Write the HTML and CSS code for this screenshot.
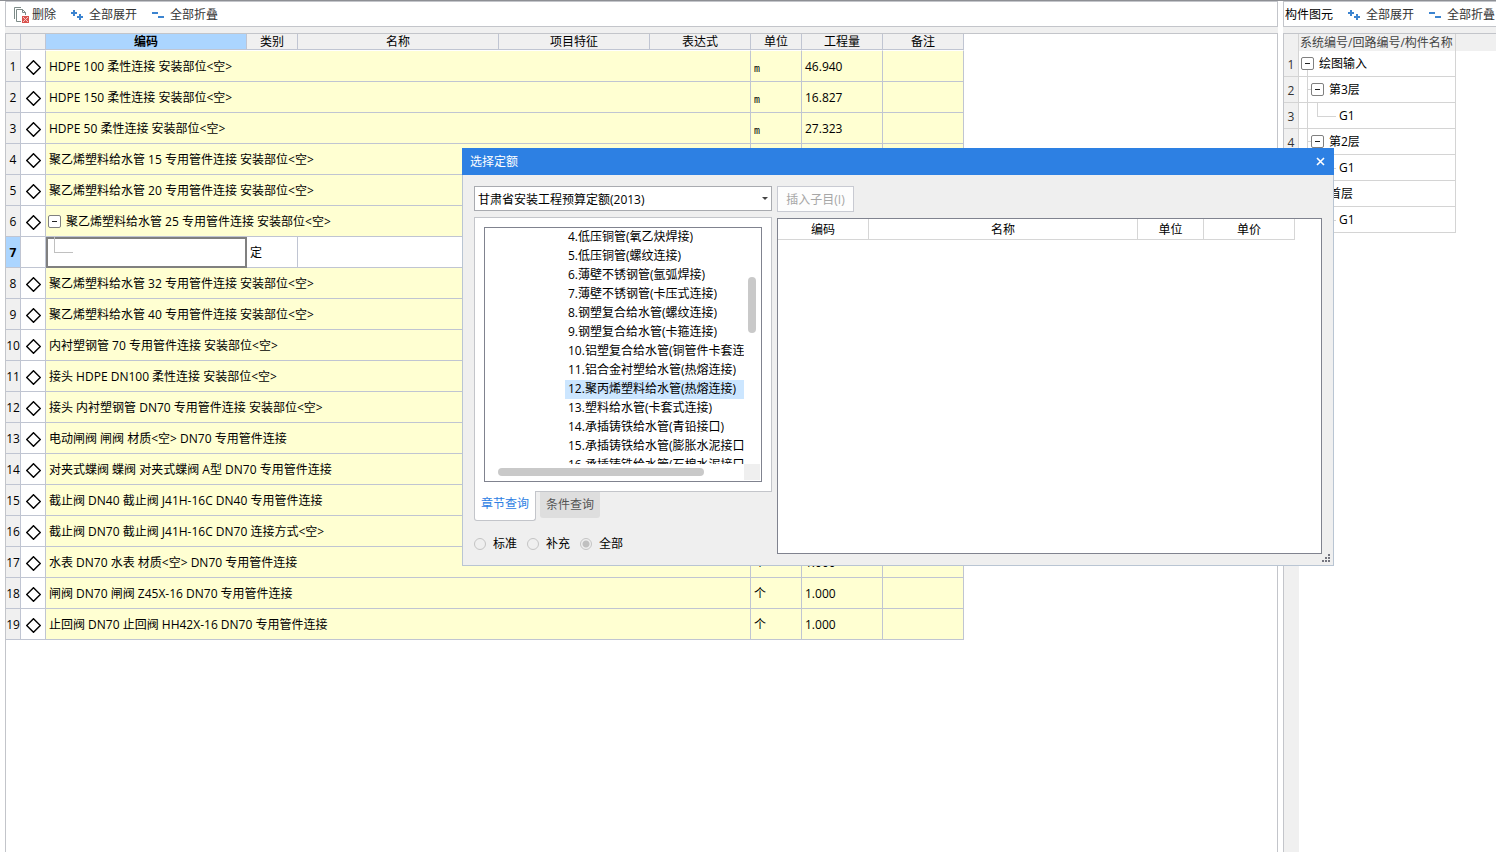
FILE: index.html
```html
<!DOCTYPE html>
<html lang="zh-CN">
<head>
<meta charset="utf-8">
<title>选择定额</title>
<link rel="stylesheet" href="styles.css">
</head>
<body>
<svg class="defs" aria-hidden="true">
  <symbol id="diamond" viewBox="0 0 15 15"><path d="M7.5 .7 14.300 7.500 7.500 14.300 .7 7.500Z" fill="#fff" stroke="#000" stroke-width="1.4"/></symbol>
  <symbol id="expand" viewBox="0 0 13 11"><path d="M0 3h6M3 0v6M6 7h6M9 4v6" fill="none" stroke="#3c84d0" stroke-width="2"/></symbol>
  <symbol id="collapse" viewBox="0 0 13 11"><path d="M0 3h6M6 7h6" fill="none" stroke="#3c84d0" stroke-width="2"/></symbol>
  <symbol id="remove" viewBox="0 0 16 16"><path d="M1.500 12V.5H8" fill="none" stroke="#7d8b88"/><path d="M8 14.500H3.500V2.500h6l3 3V8M9.500 2.500v3h3" fill="none" stroke="#7d8b88"/><path d="M9 9h7v7H9z" fill="#d9534f"/><path d="m10 10 5 5m0-5-5 5" stroke="#f6c9c6" stroke-width="1"/></symbol>
</svg>
<div class="app">
  <main class="pane pane-main">
    <div class="toolbar">
      <button class="tool" type="button"><svg class="icon-doc"><use href="#remove"/></svg>删除</button>
      <button class="tool" type="button"><svg class="icon"><use href="#expand"/></svg>全部展开</button>
      <button class="tool" type="button"><svg class="icon"><use href="#collapse"/></svg>全部折叠</button>
    </div>
    <div class="sheet">
      <table class="grid">
        <colgroup><col class="w-num"><col class="w-mark"><col class="w-code"><col class="w-kind"><col class="w-name"><col class="w-feature"><col class="w-expr"><col class="w-unit"><col class="w-qty"><col class="w-note"></colgroup>
        <thead><tr><th></th><th></th><th class="current">编码</th><th>类别</th><th>名称</th><th>项目特征</th><th>表达式</th><th>单位</th><th>工程量</th><th>备注</th></tr></thead>
        <tbody>
          <tr><th>1</th><td class="mark"><svg><use href="#diamond"/></svg></td><td colspan="5">HDPE 100 柔性连接 安装部位&lt;空&gt;</td><td class="unit">m</td><td>46.940</td><td></td></tr>
          <tr><th>2</th><td class="mark"><svg><use href="#diamond"/></svg></td><td colspan="5">HDPE 150 柔性连接 安装部位&lt;空&gt;</td><td class="unit">m</td><td>16.827</td><td></td></tr>
          <tr><th>3</th><td class="mark"><svg><use href="#diamond"/></svg></td><td colspan="5">HDPE 50 柔性连接 安装部位&lt;空&gt;</td><td class="unit">m</td><td>27.323</td><td></td></tr>
          <tr><th>4</th><td class="mark"><svg><use href="#diamond"/></svg></td><td colspan="5">聚乙烯塑料给水管 15 专用管件连接 安装部位&lt;空&gt;</td><td></td><td></td><td></td></tr>
          <tr><th>5</th><td class="mark"><svg><use href="#diamond"/></svg></td><td colspan="5">聚乙烯塑料给水管 20 专用管件连接 安装部位&lt;空&gt;</td><td></td><td></td><td></td></tr>
          <tr><th>6</th><td class="mark"><svg><use href="#diamond"/></svg></td><td colspan="5" class="parent"><button class="toggle" type="button" aria-label="折叠"></button>聚乙烯塑料给水管 25 专用管件连接 安装部位&lt;空&gt;</td><td></td><td></td><td></td></tr>
          <tr class="editing"><th>7</th><td class="mark"></td><td class="editor"><input type="text" aria-label="编码"></td><td>定</td><td></td><td></td><td></td><td></td><td></td><td></td></tr>
          <tr><th>8</th><td class="mark"><svg><use href="#diamond"/></svg></td><td colspan="5">聚乙烯塑料给水管 32 专用管件连接 安装部位&lt;空&gt;</td><td></td><td></td><td></td></tr>
          <tr><th>9</th><td class="mark"><svg><use href="#diamond"/></svg></td><td colspan="5">聚乙烯塑料给水管 40 专用管件连接 安装部位&lt;空&gt;</td><td></td><td></td><td></td></tr>
          <tr><th>10</th><td class="mark"><svg><use href="#diamond"/></svg></td><td colspan="5">内衬塑钢管 70 专用管件连接 安装部位&lt;空&gt;</td><td></td><td></td><td></td></tr>
          <tr><th>11</th><td class="mark"><svg><use href="#diamond"/></svg></td><td colspan="5">接头 HDPE DN100 柔性连接 安装部位&lt;空&gt;</td><td></td><td></td><td></td></tr>
          <tr><th>12</th><td class="mark"><svg><use href="#diamond"/></svg></td><td colspan="5">接头 内衬塑钢管 DN70 专用管件连接 安装部位&lt;空&gt;</td><td></td><td></td><td></td></tr>
          <tr><th>13</th><td class="mark"><svg><use href="#diamond"/></svg></td><td colspan="5">电动闸阀 闸阀 材质&lt;空&gt; DN70 专用管件连接</td><td></td><td></td><td></td></tr>
          <tr><th>14</th><td class="mark"><svg><use href="#diamond"/></svg></td><td colspan="5">对夹式蝶阀 蝶阀 对夹式蝶阀 A型 DN70 专用管件连接</td><td></td><td></td><td></td></tr>
          <tr><th>15</th><td class="mark"><svg><use href="#diamond"/></svg></td><td colspan="5">截止阀 DN40 截止阀 J41H-16C DN40 专用管件连接</td><td></td><td></td><td></td></tr>
          <tr><th>16</th><td class="mark"><svg><use href="#diamond"/></svg></td><td colspan="5">截止阀 DN70 截止阀 J41H-16C DN70 连接方式&lt;空&gt;</td><td></td><td></td><td></td></tr>
          <tr><th>17</th><td class="mark"><svg><use href="#diamond"/></svg></td><td colspan="5">水表 DN70 水表 材质&lt;空&gt; DN70 专用管件连接</td><td>个</td><td>1.000</td><td></td></tr>
          <tr><th>18</th><td class="mark"><svg><use href="#diamond"/></svg></td><td colspan="5">闸阀 DN70 闸阀 Z45X-16 DN70 专用管件连接</td><td>个</td><td>1.000</td><td></td></tr>
          <tr><th>19</th><td class="mark"><svg><use href="#diamond"/></svg></td><td colspan="5">止回阀 DN70 止回阀 HH42X-16 DN70 专用管件连接</td><td>个</td><td>1.000</td><td></td></tr>
        </tbody>
      </table>
    </div>
  </main>
  <aside class="pane pane-side">
    <div class="toolbar">
      <span class="caption">构件图元</span>
      <button class="tool" type="button"><svg class="icon"><use href="#expand"/></svg>全部展开</button>
      <button class="tool" type="button"><svg class="icon"><use href="#collapse"/></svg>全部折叠</button>
    </div>
    <div class="tree-sheet">
      <div class="tree-band">
        <table class="tree">
          <colgroup><col class="w-num"><col class="w-tree"></colgroup>
          <thead><tr><th></th><th>系统编号/回路编号/构件名称</th></tr></thead>
          <tbody>
            <tr><th>1</th><td class="root"><button class="toggle" type="button" aria-label="折叠"></button>绘图输入</td></tr>
            <tr><th>2</th><td class="floor"><button class="toggle" type="button" aria-label="折叠"></button>第3层</td></tr>
            <tr><th>3</th><td class="leaf">G1</td></tr>
            <tr><th>4</th><td class="floor"><button class="toggle" type="button" aria-label="折叠"></button>第2层</td></tr>
            <tr><th>5</th><td class="leaf">G1</td></tr>
            <tr><th>6</th><td class="floor"><button class="toggle" type="button" aria-label="折叠"></button>首层</td></tr>
            <tr><th>7</th><td class="leaf">G1</td></tr>
          </tbody>
        </table>
      </div>
      <div class="gutter"></div>
    </div>
  </aside>
</div>

<section class="dialog" role="dialog" aria-labelledby="dialog-title">
  <header class="dialog-bar">
    <span id="dialog-title">选择定额</span>
    <button class="close" type="button" aria-label="关闭"><svg viewBox="0 0 9 9"><path d="m1 1 7 7m0-7-7 7" stroke="#fff" stroke-width="1.6"/></svg></button>
  </header>
  <div class="dialog-body">
    <div class="picker">
      <div class="select-wrap">
        <select aria-label="定额库"><option>甘肃省安装工程预算定额(2013)</option></select>
      </div>
      <div class="tab-panel">
        <div class="list-box">
          <ul class="chapters">
            <li>4.低压铜管(氧乙炔焊接)</li>
            <li>5.低压铜管(螺纹连接)</li>
            <li>6.薄壁不锈钢管(氩弧焊接)</li>
            <li>7.薄壁不锈钢管(卡压式连接)</li>
            <li>8.钢塑复合给水管(螺纹连接)</li>
            <li>9.钢塑复合给水管(卡箍连接)</li>
            <li>10.铝塑复合给水管(铜管件卡套连</li>
            <li>11.铝合金衬塑给水管(热熔连接)</li>
            <li class="selected">12.聚丙烯塑料给水管(热熔连接)</li>
            <li>13.塑料给水管(卡套式连接)</li>
            <li>14.承插铸铁给水管(青铅接口)</li>
            <li>15.承插铸铁给水管(膨胀水泥接口</li>
            <li>16.承插铸铁给水管(石棉水泥接口</li>
          </ul>
          <div class="track-y"><div class="thumb-y"></div></div>
          <div class="track-x"><div class="thumb-x"></div></div>
          <div class="corner"></div>
        </div>
      </div>
      <div class="tabs">
        <button class="tab active" type="button">章节查询</button>
        <button class="tab" type="button">条件查询</button>
      </div>
      <div class="scopes">
        <label><input type="radio" name="scope" disabled>标准</label>
        <label><input type="radio" name="scope" disabled>补充</label>
        <label><input type="radio" name="scope" disabled checked>全部</label>
      </div>
    </div>
    <div class="results">
      <button class="insert" type="button" disabled>插入子目(I)</button>
      <div class="result-box">
        <table class="result">
          <colgroup><col class="r-code"><col class="r-name"><col class="r-unit"><col class="r-price"></colgroup>
          <thead><tr><th>编码</th><th>名称</th><th>单位</th><th>单价</th></tr></thead>
        </table>
      </div>
    </div>
  </div>
  <svg class="grip" viewBox="0 0 8 8"><path d="M6 0h2v2H6zM3 3h2v2H3zM6 3h2v2H6zM0 6h2v2H0zM3 6h2v2H3zM6 6h2v2H6z" fill="#74757f"/></svg>
</section>
</body>
</html>
```

FILE: styles.css
```css
* { box-sizing: border-box; }

body {
  margin: 0;
  height: 100vh;
  overflow: hidden;
  background: #fff;
  color: #000;
  font: 12px/16px "Open Sans", "Noto Sans CJK SC", sans-serif;
}

button, input, select { font: inherit; color: inherit; }
button { padding: 0; border: 0; background: none; }
.defs { display: none; }

.app {
  display: flex;
  gap: 5px;
  height: 100%;
  padding-left: 5px;
  border-top: 1px solid #8d8f94;
}

.pane { display: flex; flex-direction: column; background: #f0f0f0; }
.pane-main { flex: 1; min-width: 0; }
.pane-side { width: 213px; overflow: hidden; }

/* toolbars */
.toolbar {
  display: flex;
  align-items: center;
  gap: 15px;
  flex: none;
  height: 26px;
  padding: 2px 0 0 7px;
  border: 1px solid #c3c5ca;
  background: #fff;
  white-space: nowrap;
}
.pane-side .toolbar { padding-left: 1px; border-right: 0; }
.tool { display: flex; align-items: center; gap: 5px; flex: none; color: #333; }
.pane-main .tool:first-child { gap: 3px; }
.icon { width: 13px; height: 11px; }
.icon-doc { width: 16px; height: 16px; }

/* main grid */
.sheet {
  flex: 1;
  margin-top: 6px;
  border: 1px solid #c3c5ca;
  border-bottom: 0;
  background: #fff;
}
table { border-collapse: separate; border-spacing: 0; table-layout: fixed; }
th, td { padding: 0; overflow: hidden; white-space: nowrap; }
th { font-weight: normal; text-align: center; }

.grid { width: 958px; }
.w-num { width: 15px; }
.w-mark { width: 25px; }
.w-code, .w-name { width: 201px; }
.w-kind, .w-unit { width: 51px; }
.w-feature { width: 151px; }
.w-expr { width: 101px; }
.w-qty, .w-note { width: 81px; }

.grid th, .grid td { border-right: 1px solid #c0c5d2; border-bottom: 1px solid #c0c5d2; }
.grid thead th { height: 16px; padding-top: 1px; line-height: 14px; background: #f0f0f0; }
.grid thead .current { background: #abd5ff; font-weight: bold; }
.grid tbody th, .grid tbody td { height: 31px; padding-top: 2px; }
.grid tbody tr:first-child > * { height: 32px; border-top: 1px solid #fff; }
.grid tbody th { background: #f0f0f0; }
.grid tbody td { padding-left: 3px; background: #ffffd2; text-align: left; }
.grid tbody .mark { padding: 3px 0 0; background: #fff; text-align: center; }
.mark svg { display: block; width: 15px; height: 15px; margin: 0 auto; }
.grid tbody .unit { padding-top: 8px; font: 10px/16px "Liberation Mono", monospace; }

.grid .editing th { background: #abd5ff; font-weight: bold; }
.grid .editing td { background: #fff; }
.grid tbody .editor { position: relative; padding: 0; border: 0; }
.editor input { display: block; width: 100%; height: 31px; border: 2px solid #808080; background: #fff; outline: 0; }
.editor::after {
  content: "";
  position: absolute;
  left: 8px;
  top: 0;
  width: 18px;
  height: 15px;
  border: solid #c0c0c0;
  border-width: 0 0 1px 1px;
}

.toggle {
  position: relative;
  display: inline-block;
  width: 13px;
  height: 13px;
  margin-right: 5px;
  border: 1px solid #808080;
  border-radius: 2px;
  background: #fff;
  vertical-align: -1px;
}
.toggle::after { content: ""; position: absolute; left: 3px; top: 5px; width: 5px; height: 1px; background: #222; }
.grid .parent { padding-left: 2px; }

/* component tree */
.tree-sheet { display: flex; flex-direction: column; flex: 1; margin-top: 6px; border: solid #c3c5ca; border-width: 1px 0 0 1px; background: #fff; }
.tree-band { background: linear-gradient(#f0f0f0 17px, #fff 17px); }
.tree { width: 172px; }
.w-tree { width: 157px; }
.tree th, .tree td { border-right: 1px solid #d4d4d4; }
.tree thead th { height: 17px; line-height: 16px; color: #444; text-align: left; padding-left: 1px; }
.tree tbody th { height: 26px; padding-top: 2px; background: #f0f0f0; border-bottom: 1px solid #d4d4d4; color: #333; }
.tree td { position: relative; height: 26px; border-bottom: 1px solid #d4d4d4; }
.tree .root { padding-left: 2px; }
.tree .floor { padding-left: 12px; }
.tree .leaf { padding-left: 40px; }
.tree td::before { content: ""; position: absolute; left: 8px; top: 0; bottom: 0; border-left: 1px solid #d4d4d4; }
.tree .root::before { top: 19px; }
.tree .floor::after { content: ""; position: absolute; left: 8px; top: 12px; width: 4px; height: 13px; border-top: 1px solid #d4d4d4; }
.tree .leaf::after { content: ""; position: absolute; left: 18px; top: 0; width: 18px; height: 13px; border: solid #d4d4d4; border-width: 0 0 1px 1px; }
.gutter { flex: 1; width: 15px; background: #f0f0f0; }

/* dialog */
.dialog {
  position: absolute;
  left: 462px;
  top: 148px;
  width: 872px;
  border: solid #b9c5d3;
  border-width: 0 1px 1px;
  background: #efefef;
}
.dialog-bar {
  display: flex;
  align-items: center;
  justify-content: space-between;
  height: 27px;
  margin: 0 -1px;
  padding: 0 9px 0 8px;
  background: #2d80e3;
  color: #fff;
}
.close svg { display: block; width: 9px; height: 9px; }
.dialog-body { display: flex; gap: 5px; padding: 11px; }
.picker { flex: none; width: 298px; }

.select-wrap { position: relative; }
.select-wrap select {
  display: block;
  width: 100%;
  height: 25px;
  padding: 2px 3px 0;
  border: 1px solid #a9abb0;
  border-radius: 0;
  background: #fff;
  appearance: none;
}
.select-wrap::after {
  content: "";
  position: absolute;
  right: 4px;
  top: 11px;
  border: 3px solid transparent;
  border-top-color: #444;
  border-bottom: 0;
}

.tab-panel { margin-top: 6px; padding: 9px; border: 1px solid #c3c5ca; background: #fff; }
.list-box {
  display: grid;
  grid-template: 236px 17px / 1fr 16px;
  padding-right: 1px;
  border: 1px solid #80838f;
}
.chapters { margin: 0; padding: 0 0 0 80px; overflow: hidden; list-style: none; white-space: nowrap; }
.chapters li { height: 19px; padding-left: 3px; line-height: 17px; }
.chapters .selected { background: #cce6ff; }
.track-y { padding: 49px 4px 0; }
.thumb-y { width: 8px; height: 56px; border-radius: 4px; background: #c9c9c9; }
.track-x { padding: 4px 0 0 13px; }
.thumb-x { width: 206px; height: 8px; border-radius: 4px; background: #c9c9c9; }
.corner { height: 16px; background: #efefef; }

.tabs { display: flex; align-items: flex-start; gap: 4px; height: 30px; }
.tab { width: 60px; height: 26px; padding-bottom: 1px; border-radius: 0 0 3px 3px; background: #dedede; color: #555; }
.tab.active {
  position: relative;
  width: 62px;
  height: 30px;
  margin-top: -1px;
  padding-bottom: 3px;
  border: 1px solid #c3c5ca;
  border-top: 0;
  background: #fff;
  color: #2d80e3;
}

.scopes { display: flex; gap: 10px; margin: 14px 0 2px; }
.scopes label { display: flex; align-items: center; gap: 6px; }
.scopes input {
  width: 12px;
  height: 12px;
  margin: 0 1px 1px 0;
  border: 1px solid #c4c4c4;
  border-radius: 50%;
  appearance: none;
}
.scopes input:checked { background: radial-gradient(circle, #c0c0c0 3px, transparent 4px); }

.results { display: flex; flex-direction: column; flex: 1; }
.insert { width: 77px; height: 26px; padding-top: 1px; border: 1px solid #c8cad2; background: #fdfdfd; color: #a6a6a6; }
.result-box { flex: 1; margin-top: 6px; border: 1px solid #80838f; background: #fff; }
.result { width: 517px; }
.r-code, .r-price { width: 91px; }
.r-name { width: 269px; }
.r-unit { width: 66px; }
.result th { height: 21px; padding-top: 2px; border: solid #d6d6d6; border-width: 0 1px 1px 0; }
.grip { position: absolute; right: 3px; bottom: 3px; width: 8px; height: 8px; }
```
